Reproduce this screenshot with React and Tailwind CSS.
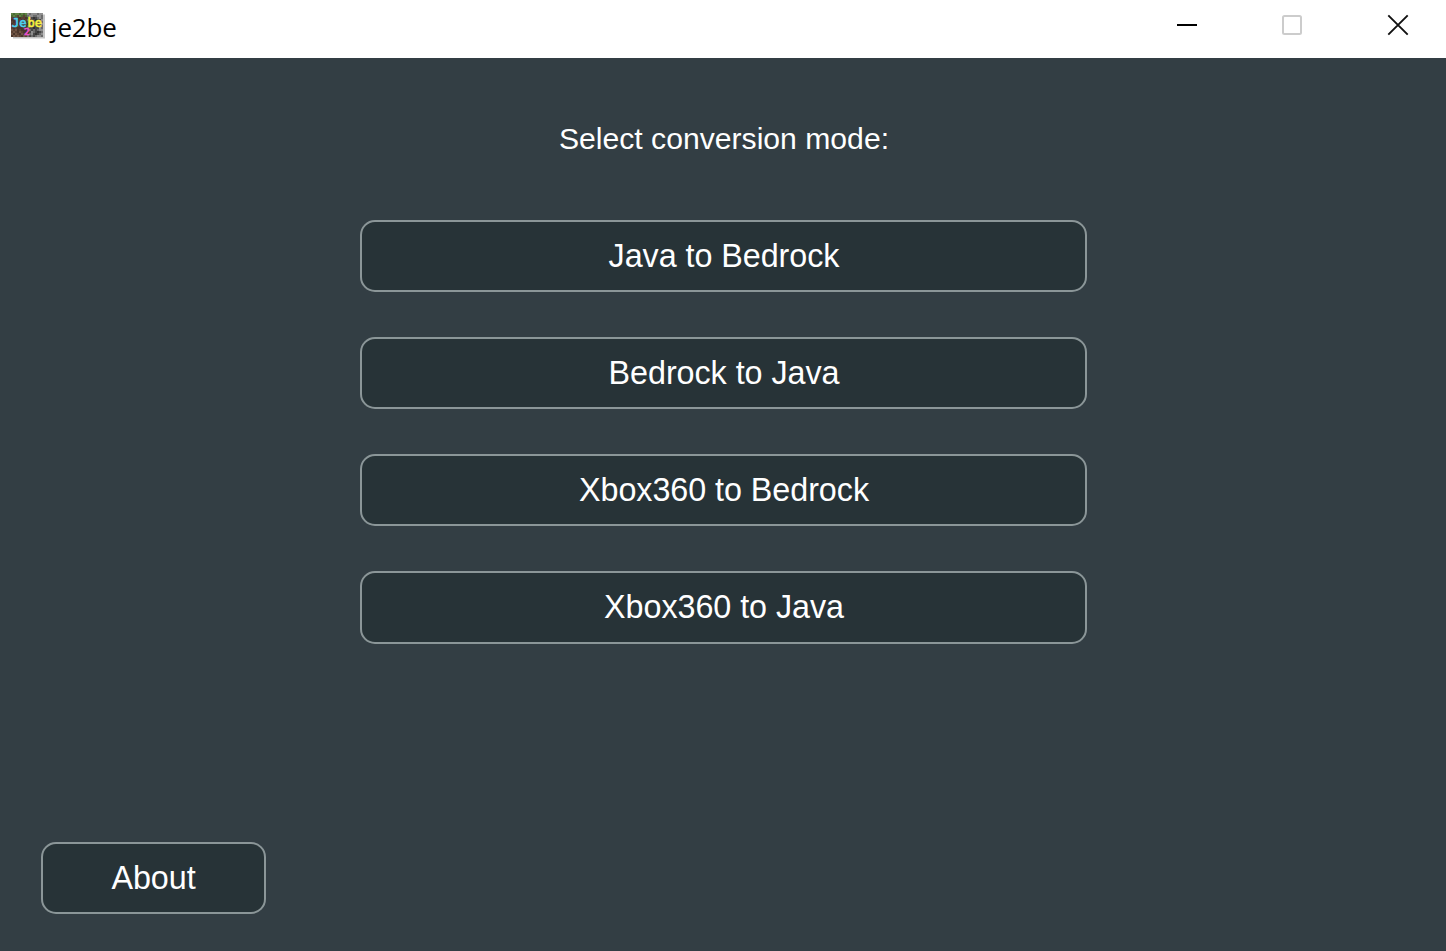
const MODES = ['Java to Bedrock', 'Bedrock to Java', 'Xbox360 to Bedrock', 'Xbox360 to Java'];

const PALETTE = {
  g: '#5f8244',
  G: '#4a6b35',
  d: '#5a4234',
  D: '#49362c',
  b: '#6f5444',
  s: '#6c6c6c',
  S: '#484848',
  l: '#8e8e8e',
  k: '#333333',
};

const TEXTURE = [
  'gGggGgGglslllsll',
  'GgGdgGdGsllsslls',
  'dDdDDddDSsSkSsls',
  'DDdDdDDdskSSkSSl',
  'dDDDDdDDSSkSSkSs',
  'DdDDdDDdkSSkSSSl',
  'bDDdDDDDSkSSSkSs',
  'dDdDDDdDsSSkSSls',
  'bdbDdDDDSsSsSsll',
  'dbdDbdDDkSlsSkSs',
  'bDbdDbdDSslSkSsl',
  'DbdbdDbdsSsSslls',
];

function AppIcon() {
  return (
    <svg width="36" height="28" viewBox="0 0 36 28" className="ml-[10px] mt-3 shrink-0" aria-hidden="true">
      <rect x="3" y="2.5" width="32" height="24" fill="#c4c4c4" />
      <g transform="translate(1 1)" shapeRendering="crispEdges">
        {TEXTURE.map((line, row) =>
          [...line].map((cell, col) => (
            <rect key={`${col}-${row}`} x={col * 2} y={row * 2} width="2" height="2" fill={PALETTE[cell]} />
          )),
        )}
      </g>
      <g fontFamily="'DejaVu Sans Mono', monospace">
        <text x="2" y="15" fontSize="13" textLength="14.5" lengthAdjust="spacingAndGlyphs" fill="#4cd0f0" stroke="#4cd0f0" strokeWidth="0.7">Je</text>
        <text x="17.5" y="15" fontSize="13" textLength="14.5" lengthAdjust="spacingAndGlyphs" fill="#f6f040" stroke="#f6f040" strokeWidth="0.7">be</text>
        <text x="14" y="23" fontSize="9.5" fill="#ea50cc" stroke="#ea50cc" strokeWidth="0.7">2</text>
      </g>
    </svg>
  );
}

function TitleBar() {
  return (
    <header className="flex h-[58px] shrink-0 items-start bg-white text-black">
      <AppIcon />
      <h1 className="ml-[5px] mt-[9px] font-['Open_Sans',sans-serif] text-[26px] leading-9 tracking-[-0.15px]">je2be</h1>
      <div className="ml-auto mr-[37px] mt-[14px] flex">
        <button aria-label="Minimize" className="mr-[83px]">
          <svg width="22" height="22" className="block">
            <path d="M1 11h20" stroke="#000" strokeWidth="2" />
          </svg>
        </button>
        <button aria-label="Maximize" disabled className="mr-[84px]">
          <svg width="22" height="22" className="block">
            <rect x="2" y="2" width="18" height="18" rx="1.5" fill="none" stroke="#ccc" strokeWidth="2" />
          </svg>
        </button>
        <button aria-label="Close">
          <svg width="22" height="22" className="block">
            <path d="M1.3 1.3l19.4 19.4M20.7 1.3L1.3 20.7" stroke="#111" strokeWidth="1.9" />
          </svg>
        </button>
      </div>
    </header>
  );
}

function Button({ className, children }) {
  return (
    <button
      className={`flex items-center justify-center rounded-[15px] border-2 border-[#8b9698] bg-[#273337] text-[32.3px] leading-none tracking-[-0.05px] ${className}`}
    >
      {children}
    </button>
  );
}

export default function App() {
  return (
    <div className="flex h-screen flex-col overflow-hidden bg-[#333e44] font-['Liberation_Sans',Arial,sans-serif] text-white">
      <TitleBar />
      <main className="flex flex-1 flex-col items-center pb-[37px] pt-[61px]">
        <p className="ml-[2px] text-[30.15px] leading-10">Select conversion mode:</p>
        <div className="ml-[1px] mt-[61px] flex flex-col gap-[45px]">
          {MODES.map((mode) => (
            <Button key={mode} className="h-[72px] w-[727px] pl-[1px] last:h-[73px]">
              {mode}
            </Button>
          ))}
        </div>
        <Button className="ml-[41px] mt-auto h-[72px] w-[225px] self-start">About</Button>
      </main>
    </div>
  );
}
